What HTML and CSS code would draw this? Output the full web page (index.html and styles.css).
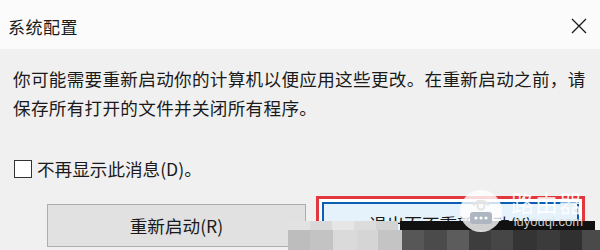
FILE: index.html
```html
<!DOCTYPE html>
<html>
  <head>
    <meta charset="utf-8">
    <link rel="stylesheet" href="styles.css">
    <title>系统配置</title>
  </head>
  <body>
    <div class="dialog">
      <!--Title bar-->
      <div class="titlebar">
        <span class="title">系统配置</span>
        <svg class="close" width="16" height="16" viewBox="0 0 16 16">
          <path d="M1 1 L15 15 M15 1 L1 15" stroke="#1a1a1a" stroke-width="1.3" fill="none"/>
        </svg>
      </div>
      <div class="content">
        <p class="message">你可能需要重新启动你的计算机以便应用这些更改。在重新启动之前，请<br>保存所有打开的文件并关闭所有程序。</p>
        <label class="check-row">
          <span class="checkbox"></span>
          <span>不再显示此消息(D)。</span>
        </label>
        <div class="buttons">
          <button class="btn">重新启动(R)</button>
          <button class="btn btn-default">退出而不重新启动(X)</button>
        </div>
      </div>
      <!--Mosaic over the bottom edge-->
      <div class="mosaic-top"></div>
      <div class="mosaic"></div>
      <!--Watermark-->
      <div class="watermark">
        <div class="wm-logo">
          <svg width="44" height="44" viewBox="0 0 44 44">
            <circle cx="22" cy="22" r="21" fill="rgba(255,255,255,0.8)"/>
            <path d="M14 16 Q22 8 30 16" stroke="#e4e4e4" stroke-width="2.5" fill="none"/>
            <circle cx="22" cy="17" r="3.5" fill="none" stroke="#e4e4e4" stroke-width="2"/>
            <rect x="11" y="23" width="22" height="12" rx="3" fill="#aeb6c2"/>
            <circle cx="17" cy="29" r="1.6" fill="#ffffff"/>
            <circle cx="22" cy="29" r="1.6" fill="#ffffff"/>
            <circle cx="27" cy="29" r="1.6" fill="#ffffff"/>
          </svg>
        </div>
        <div class="wm-text">
          <span class="wm-name">路由器</span>
          <span class="wm-url">luyouqi.com</span>
        </div>
      </div>
    </div>
  </body>
</html>
```
FILE: styles.css
```css
body {
  margin: 0;
  font-family: "Noto Sans CJK SC", "Noto Sans", sans-serif;
  color: #1a1a1a;
}

.dialog {
  position: relative;
  width: 600px;
  height: 250px;
  overflow: hidden;
  background-color: #f0f0f0;
}

.titlebar {
  height: 49px;
  background-color: #fbfbfb;
  display: flex;
  align-items: center;
  justify-content: space-between;
  padding: 3px 12px 0 8px;
  box-sizing: border-box;
}

.title {
  font-size: 17px;
  letter-spacing: 0.5px;
}

.close {
  margin-right: 1px;
}

.content {
  padding: 15px 0 0 13px;
}

.message {
  margin: 0;
  font-size: 17.6px;
  line-height: 29px;
  letter-spacing: 0.3px;
}

.check-row {
  display: flex;
  align-items: center;
  gap: 5px;
  margin-top: 32px;
  margin-left: 1px;
  height: 29px;
  font-size: 17.6px;
}

.checkbox {
  width: 16px;
  height: 16px;
  border: 1px solid #333333;
  background-color: #ffffff;
}

.buttons {
  display: flex;
  gap: 16px;
  margin-top: 21px;
  padding-left: 34px;
}

.btn {
  width: 259px;
  height: 43px;
  font-family: "Noto Sans CJK SC", "Noto Sans", sans-serif;
  font-size: 17.6px;
  color: #1a1a1a;
  background-color: #e1e1e1;
  border: 1px solid #adadad;
  padding: 0;
}

.btn-default {
  width: 257px;
  margin-top: -2px;
  background-color: #e5f1fb;
  border: 2px solid #0a5fb4;
  box-shadow: 0 0 0 3px #ffffff, 0 0 0 6px #e2373d;
}

/* mosaic blur over the bottom strip */
.mosaic-top {
  position: absolute;
  left: 288px;
  top: 221px;
  width: 307px;
  height: 9px;
  background: linear-gradient(to right,
    #e2e2e2 0 22px, #d9d9d9 22px 44px, #e6e6e6 44px 66px,
    #dcdcdc 66px 88px, #d2d2d2 88px 110px,
    transparent 110px 112px, #111111 112px 307px);
  background-size: 307px 9px;
}

.mosaic {
  position: absolute;
  left: 288px;
  top: 230px;
  width: 312px;
  height: 20px;
  background: linear-gradient(to right,
    #bdbdbd 0 22px, #c3c3c3 22px 45px, #dadada 45px 69px,
    #d5d5d5 69px 90px, #c4c4c4 90px 114px,
    #575757 114px 136px, #4b4b4b 136px 159px, #5c5c5c 159px 181px,
    #3d3d3d 181px 203px, #464646 203px 225px, #343434 225px 249px,
    #3b3b3b 249px 272px, #303030 272px 294px, #4a4a4a 294px 312px);
}

.watermark {
  position: absolute;
  left: 459px;
  top: 189px;
  display: flex;
  align-items: flex-start;
  gap: 8px;
}

.wm-text {
  display: flex;
  flex-direction: column;
  align-items: flex-end;
  color: rgba(255, 255, 255, 0.88);
}

.wm-name {
  font-size: 23px;
  line-height: 26px;
  letter-spacing: 1px;
}

.wm-url {
  font-family: "Liberation Sans", sans-serif;
  font-size: 13px;
  line-height: 14px;
  color: rgba(215, 215, 215, 0.95);
}
```
